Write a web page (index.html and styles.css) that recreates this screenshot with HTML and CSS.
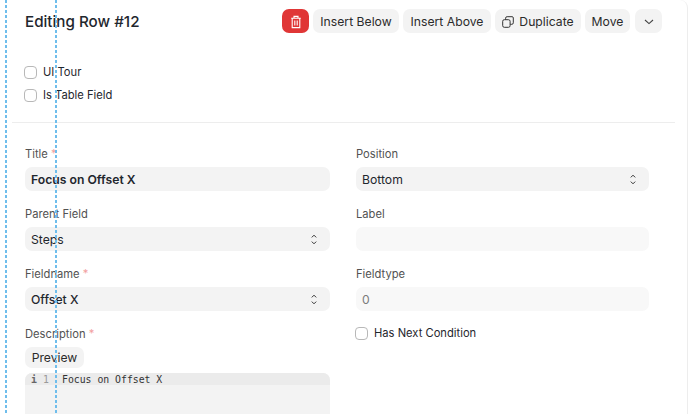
FILE: index.html
```html
<!DOCTYPE html>
<html lang="en">
<head>
<meta charset="utf-8">
<title>Editing Row #12</title>
<link rel="stylesheet" href="styles.css">
</head>
<body>
<div class="guide guide-a"></div>
<div class="guide guide-b"></div>
<main class="card">
  <header class="head">
    <h1 class="title">Editing Row #12</h1>
    <div class="actions">
      <button class="btn btn-danger" aria-label="Delete">
        <svg width="14" height="14" viewBox="0 0 14 14" fill="none" stroke="#fff" stroke-width="1.1"><path d="M2.2 3.2h9.6M5 3V1.4h4V3M3.2 3.4v9.2h7.6V3.4M5.8 5.4v5M8.2 5.4v5"/></svg>
      </button>
      <button class="btn w-below">Insert Below</button>
      <button class="btn w-above">Insert Above</button>
      <button class="btn w-dup">
        <svg width="12" height="12" viewBox="0 0 12 12" fill="none" stroke="#333" stroke-width="1"><rect x="0.7" y="3.7" width="7.4" height="7.6" rx="1.6"/><path d="M3.6 3.6V2.2A1.5 1.5 0 0 1 5.1 .7h5a1.2 1.2 0 0 1 1.2 1.2v4.9a1.5 1.5 0 0 1-1.5 1.5H8.2"/></svg>
        Duplicate
      </button>
      <button class="btn w-move">Move</button>
      <button class="btn w-more" aria-label="More">
        <svg width="12" height="8" viewBox="0 0 12 8" fill="none" stroke="#444" stroke-width="1.1"><path d="M2 2l4 3.6L10 2"/></svg>
      </button>
    </div>
  </header>

  <section class="checks">
    <label class="check"><span class="box"></span>UI Tour</label>
    <label class="check"><span class="box"></span>Is Table Field</label>
  </section>

  <hr class="rule">

  <section class="form">
    <div class="col col-left">
      <div class="field">
        <div class="label">Title <span class="req">*</span></div>
        <div class="control strong">Focus on Offset X</div>
      </div>
      <div class="field">
        <div class="label">Parent Field</div>
        <div class="control select">Steps
          <svg class="updown" width="6" height="11" viewBox="0 0 6 11" fill="none" stroke="#333" stroke-width="1"><path d="M.8 3.4L3 1.2l2.2 2.2M.8 7.6L3 9.8l2.2-2.2"/></svg>
        </div>
      </div>
      <div class="field">
        <div class="label">Fieldname <span class="req">*</span></div>
        <div class="control select strong-soft">Offset X
          <svg class="updown" width="6" height="11" viewBox="0 0 6 11" fill="none" stroke="#333" stroke-width="1"><path d="M.8 3.4L3 1.2l2.2 2.2M.8 7.6L3 9.8l2.2-2.2"/></svg>
        </div>
      </div>
      <div class="field field-desc">
        <div class="label">Description <span class="req">*</span></div>
        <button class="btn preview">Preview</button>
        <div class="editor">
          <div class="editor-line">
            <span class="gutter"><span class="info">i</span><span class="num">1</span></span>
            <span class="code">Focus on Offset X</span>
          </div>
        </div>
      </div>
    </div>
    <div class="col col-right">
      <div class="field">
        <div class="label">Position</div>
        <div class="control select">Bottom
          <svg class="updown" width="6" height="11" viewBox="0 0 6 11" fill="none" stroke="#333" stroke-width="1"><path d="M.8 3.4L3 1.2l2.2 2.2M.8 7.6L3 9.8l2.2-2.2"/></svg>
        </div>
      </div>
      <div class="field">
        <div class="label">Label</div>
        <div class="control readonly"></div>
      </div>
      <div class="field">
        <div class="label">Fieldtype</div>
        <div class="control readonly muted">0</div>
      </div>
      <label class="check check-next"><span class="box"></span>Has Next Condition</label>
    </div>
  </section>
</main>
</body>
</html>
```

FILE: styles.css
```css
* { box-sizing: border-box; }
html, body { margin: 0; height: 414px; overflow: hidden; background: #fff; }
body { font-family: Inter, "Liberation Sans", sans-serif; color: #1f272e; position: relative; }

.guide { position: absolute; top: 0; bottom: 0; width: 2px; z-index: 5; background: repeating-linear-gradient(to bottom, #6fbeec 0 3px, transparent 3px 5px); }
.guide-a { left: 5px; }
.guide-b { left: 55px; }

.card { width: 688px; height: 414px; padding: 9px 12px 0; border-right: 1px solid #ededed; border-top-right-radius: 8px; overflow: hidden; }

.head { display: flex; justify-content: space-between; align-items: center; height: 24px; padding: 0 13px; }
.title { margin: 0; padding-top: 2px; font-size: 15.2px; line-height: 24px; font-weight: 500; color: #1f272e; }
.actions { display: flex; gap: 4px; }

.btn { height: 24px; border: 0; border-radius: 7px; background: #f3f3f3; color: #2b2b2b; font: 400 12.2px/24px Inter, "Liberation Sans", sans-serif; padding: 1px 0 0; display: flex; align-items: center; justify-content: center; }
.btn-danger { width: 27px; background: #e03636; }
.w-below { width: 86px; }
.w-above { width: 88px; }
.w-dup { width: 86px; gap: 5px; }
.w-move { width: 45px; }
.w-more { width: 27px; margin-left: 1px; }

.checks { display: flex; flex-direction: column; gap: 11px; padding: 33px 13px 0 12px; }
.check { display: flex; align-items: center; gap: 6px; height: 12px; font-size: 11.2px; line-height: 12px; font-weight: 400; color: #1f272e; }
.box { width: 13px; height: 13px; border: 1px solid #b8b8b8; border-radius: 4px; background: #fff; flex: none; }

.rule { margin: 21px 0 0; border: 0; border-top: 1px solid #ededed; width: 663px; }

.form { display: grid; grid-template-columns: 305px 293px; column-gap: 26px; padding: 23px 13px 0; }
.col { display: flex; flex-direction: column; }
.field { height: 60px; }
.label { font-size: 11.2px; line-height: 17px; color: #525252; margin-bottom: 4px; }
.req { color: #f2a0a0; }
.control { height: 24px; border-radius: 7px; background: #f3f3f3; padding: 1px 6px 0; font-size: 12.2px; line-height: 23px; color: #1f272e; display: flex; align-items: center; justify-content: space-between; }
.strong { font-weight: 600; }
.strong-soft { font-weight: 500; }
.readonly { background: #f8f8f8; }
.muted { color: #7c7c7c; }
.updown { margin-right: 7px; flex: none; }

.preview { width: 59px; height: 21px; margin-bottom: 5px; }
.editor { height: 60px; border-radius: 7px 7px 0 0; background: #f3f3f3; overflow: hidden; }
.editor-line { display: flex; height: 12px; background: #ebebeb; font: 9.8px/13px "DejaVu Sans Mono", monospace; color: #333; }
.gutter { width: 37px; padding-left: 6px; display: flex; gap: 6px; color: #999; flex: none; }
.info { font-weight: 700; color: #666; }
.code { white-space: pre; }

.check-next { margin-left: -1px; margin-top: 1px; }
```
